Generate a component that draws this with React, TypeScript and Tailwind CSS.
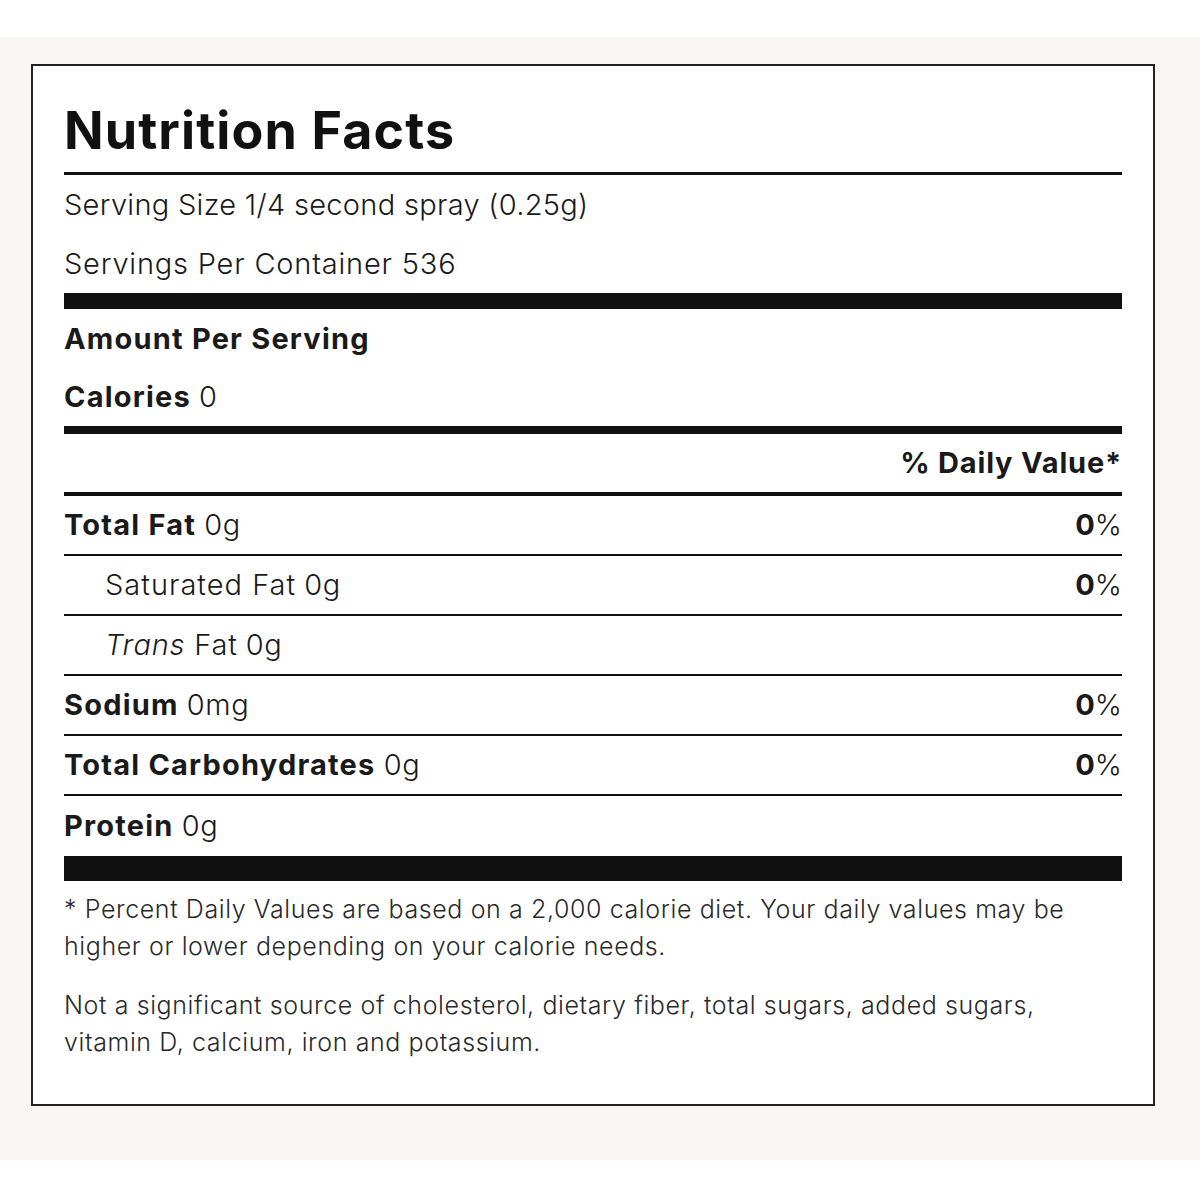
import React from 'react';

const font = { fontFamily: 'Inter, "Noto Sans", sans-serif' };

interface RowProps {
    label: React.ReactNode;
    amount: string;
    dv?: boolean;
    indent?: boolean;
    last?: boolean;
}

const Row = ({ label, amount, dv, indent, last }: RowProps) => (
    <div
        className={
            'flex items-center justify-between h-[60px] text-[29px] text-[#1a1a1a] ' +
            (last ? '' : 'border-b-2 border-[#111]')
        }
    >
        <div className={indent ? 'pl-[41px]' : ''}>
            {label} <span className="font-light tracking-[0.6px]">{amount}</span>
        </div>
        {dv && (
            <div>
                <span className="font-bold">0</span>
                <span className="font-light">%</span>
            </div>
        )}
    </div>
);

export default function App() {
    return (
        <div className="w-[1200px] h-[1200px] bg-white" style={font}>
            <div className="h-[37px]" />
            <div className="h-[1123px] bg-[#f7f6f2] pt-[27px] pl-[31px]">
                <div className="w-[1124px] h-[1042px] bg-white border-2 border-[#222] px-[31px]">
                    <h1 className="h-[106px] pt-[36px] text-[52px] leading-[58px] font-bold text-[#111] tracking-[1.1px]">
                        Nutrition Facts
                    </h1>
                    <div className="h-[3px] bg-[#111]" />
                    <div className="text-[29px] font-light text-[#1a1a1a] tracking-[0.3px]">
                        <div className="h-[59px] flex items-center">Serving Size 1/4 second spray (0.25g)</div>
                        <div className="h-[59px] flex items-center tracking-[0.8px]">Servings Per Container 536</div>
                    </div>
                    <div className="h-[16px] bg-[#111]" />
                    <div className="text-[29px] text-[#1a1a1a]">
                        <div className="h-[59px] flex items-center font-bold tracking-[1.2px]">Amount Per Serving</div>
                        <div className="h-[58px] flex items-center">
                            <span className="font-bold tracking-[1.2px]">Calories</span>&nbsp;<span className="font-light">0</span>
                        </div>
                    </div>
                    <div className="h-[8px] bg-[#111]" />
                    <div className="h-[58px] flex items-center justify-end text-[29px] font-bold text-[#1a1a1a] tracking-[0.8px]">
                        % Daily Value*
                    </div>
                    <div className="h-[4px] bg-[#111]" />
                    <Row label={<span className="font-bold tracking-[1.2px]">Total Fat</span>} amount="0g" dv />
                    <Row label={<span className="font-light tracking-[1px]">Saturated Fat</span>} amount="0g" dv indent />
                    <Row
                        label={
                            <span className="font-light tracking-[0.8px]">
                                <i>Trans</i> Fat
                            </span>
                        }
                        amount="0g"
                        indent
                    />
                    <Row label={<span className="font-bold tracking-[1.2px]">Sodium</span>} amount="0mg" dv />
                    <Row label={<span className="font-bold tracking-[1.2px]">Total Carbohydrates</span>} amount="0g" dv />
                    <Row label={<span className="font-bold tracking-[1.2px]">Protein</span>} amount="0g" last />
                    <div className="h-[25px] bg-[#111]" />
                    <div className="pt-[10px] text-[25px] leading-[37px] font-light text-[#2a2a2a] tracking-[0.6px]">
                        <p>
                            * Percent Daily Values are based on a 2,000 calorie diet. Your daily values may be
                            higher or lower depending on your calorie needs.
                        </p>
                        <p className="mt-[22px]">
                            Not a significant source of cholesterol, dietary fiber, total sugars, added sugars,
                            vitamin D, calcium, iron and potassium.
                        </p>
                    </div>
                </div>
            </div>
            <div className="h-[40px]" />
        </div>
    );
}
